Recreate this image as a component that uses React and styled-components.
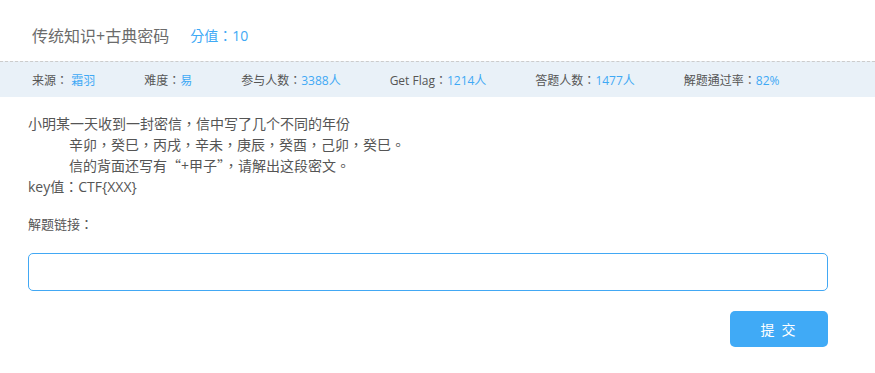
import React from 'react';
import styled, { createGlobalStyle } from 'styled-components';

const GlobalStyle = createGlobalStyle`
    body {
        margin: 0;
        background: #fff;
        font-family: "Open Sans", "Noto Sans CJK TC", sans-serif;
    }
`

const stats = [
    { label: '来源：', value: ' 霜羽' },
    { label: '难度：', value: '易' },
    { label: '参与人数：', value: '3388人' },
    { label: 'Get Flag：', value: '1214人' },
    { label: '答题人数：', value: '1477人' },
    { label: '解题通过率：', value: '82%' },
];

function App() {
    return (
        <Page>
            <GlobalStyle />
            <Header>
                <Title>传统知识+古典密码</Title>
                <Score>分值：10</Score>
            </Header>

            <InfoBar>
                {stats.map(s => (
                    <InfoItem key={s.label}>
                        {s.label}<Value>{s.value}</Value>
                    </InfoItem>
                ))}
            </InfoBar>

            <Body>
                <Line>小明某一天收到一封密信，信中写了几个不同的年份</Line>
                <Line indent>辛卯，癸巳，丙戌，辛未，庚辰，癸酉，己卯，癸巳。</Line>
                <Line indent>信的背面还写有<Cjk>“</Cjk>+甲子<Cjk>”</Cjk>，请解出这段密文。</Line>
                <Line>key值：CTF{'{'}XXX{'}'}</Line>

                <LinkLabel>解题链接：</LinkLabel>
                <AnswerInput type="text" />

                <Actions>
                    <SubmitButton>提 交</SubmitButton>
                </Actions>
            </Body>
        </Page>
    )
}

export default App

const Page = styled.div`
    width: 875px;
    height: 373px;
    overflow: hidden;
`

const Header = styled.div`
    height: 61px;
    display: flex;
    align-items: center;
    padding: 8px 0 0 32px;
    box-sizing: border-box;
    gap: 21px;
`

const Title = styled.span`
    font-size: 16px;
    color: #6b6b6b;
`

const Score = styled.span`
    font-size: 14px;
    color: #3fa9f5;
`

const InfoBar = styled.div`
    height: 36px;
    box-sizing: border-box;
    border-top: 1px dashed #cccccc;
    background: #e9f1f8;
    display: flex;
    align-items: center;
    gap: 49px;
    padding-left: 32px;
    font-size: 12px;
    color: #555;
`

const InfoItem = styled.span`
    white-space: pre;
`

const Value = styled.span`
    color: #3fa9f5;
`

const Body = styled.div`
    padding: 16px 47px 0 28px;
    color: #555;
`

const Line = styled.div`
    font-size: 14px;
    line-height: 21px;
    padding-left: ${props => props.indent ? '41px' : '0'};
`

const Cjk = styled.span`
    font-family: "Noto Sans CJK TC", sans-serif;
`

const LinkLabel = styled.div`
    font-size: 13px;
    line-height: 20px;
    margin-top: 17px;
`

const AnswerInput = styled.input`
    display: block;
    box-sizing: border-box;
    width: 800px;
    height: 38px;
    margin-top: 19px;
    border: 1px solid #42a8f4;
    border-radius: 5px;
    outline: none;
    padding: 0 10px;
    font-size: 14px;
`

const Actions = styled.div`
    width: 800px;
    display: flex;
    justify-content: flex-end;
    margin-top: 20px;
`

const SubmitButton = styled.button`
    width: 98px;
    height: 36px;
    border: none;
    border-radius: 5px;
    background: #40aaf6;
    color: #fff;
    font-family: "Noto Sans CJK TC", sans-serif;
    font-size: 14px;
    letter-spacing: 2px;
    cursor: pointer;
`
